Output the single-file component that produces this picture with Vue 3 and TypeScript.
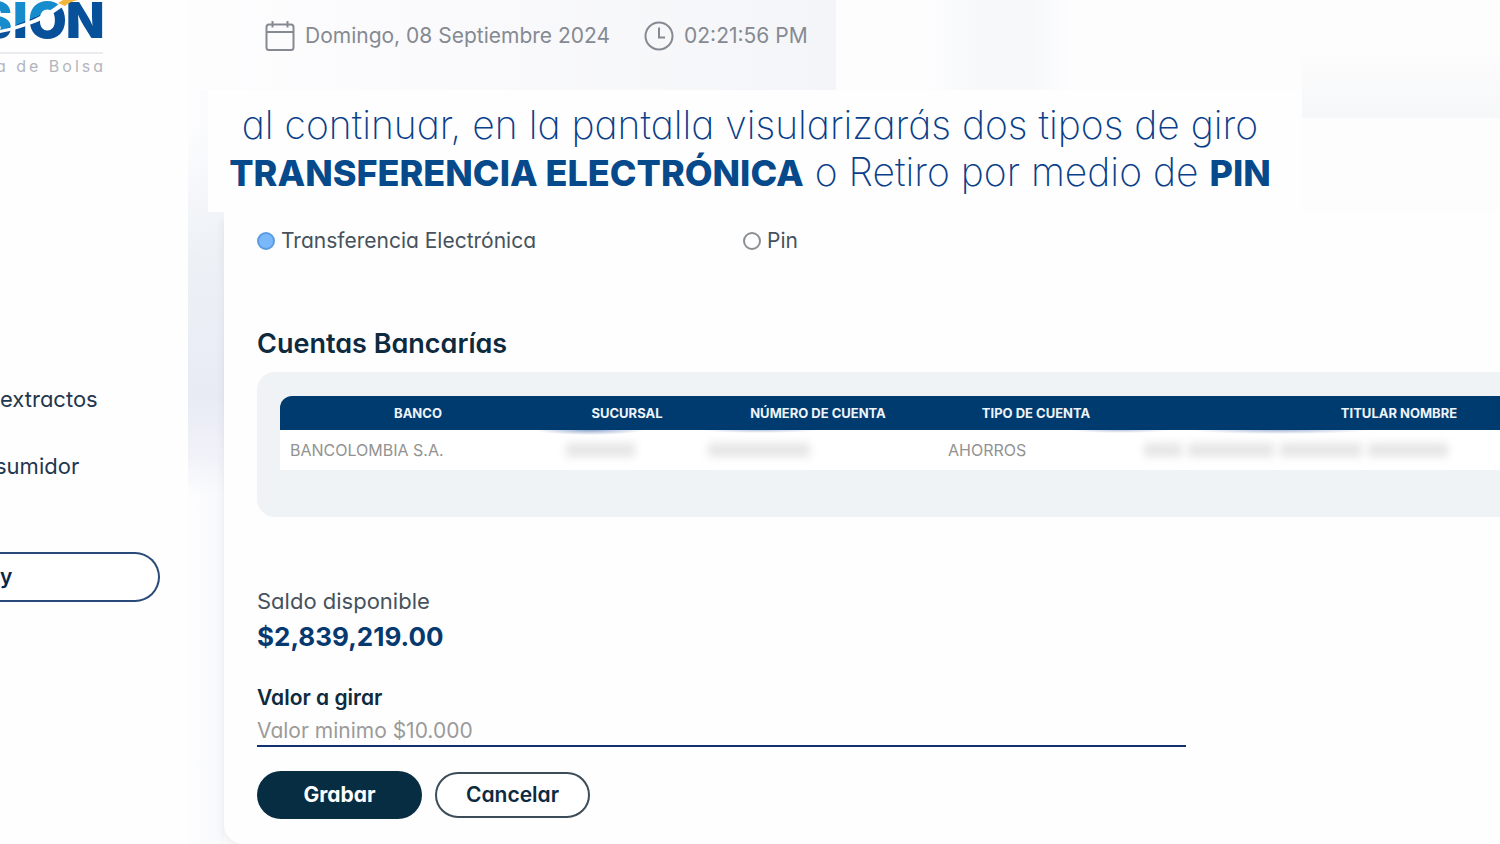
<script setup lang="ts">
import { ref } from 'vue'

interface Column {
  key: string
  label: string
}

const columns: Column[] = [
  { key: 'bank', label: 'BANCO' },
  { key: 'branch', label: 'SUCURSAL' },
  { key: 'number', label: 'NÚMERO DE CUENTA' },
  { key: 'type', label: 'TIPO DE CUENTA' },
  { key: 'holder', label: 'TITULAR NOMBRE' },
]

const method = ref<'transfer' | 'pin'>('transfer')
const amount = ref('')
</script>

<template>
  <div class="app">
    <aside class="sidebar">
      <svg class="logo" viewBox="0 0 106 54" role="img" aria-label="SION">
        <defs>
          <linearGradient id="ink" gradientUnits="userSpaceOnUse" x1="20" y1="-15" x2="46" y2="51">
            <stop offset="0.5" stop-color="#178ccd" />
            <stop offset="0.5" stop-color="#07509a" />
          </linearGradient>
        </defs>
        <g class="logo-text" fill="url(#ink)">
          <text x="-21" y="38">S</text>
          <text x="13" y="38">I</text>
          <text x="28" y="38">O</text>
          <text x="66" y="38" fill="#07509a">N</text>
        </g>
        <path d="M0 30C24 25 46 15 60 3L66 4C50 18 27 28 0 33Z" fill="#fff" />
        <path d="M58 3L63 0H78C73 1 68 3 65 6Z" fill="#f3b63c" />
        <path d="M0 53H103" stroke="#d9dbe0" stroke-width="1" />
      </svg>
      <p class="tagline">a de Bolsa</p>
      <nav class="menu">
        <a class="menu-link" href="#extractos">extractos</a>
        <a class="menu-link" href="#consumidor">sumidor</a>
      </nav>
      <button class="side-button" type="button">y</button>
    </aside>

    <main class="main">
      <header class="topbar">
        <span class="stamp">
          <svg class="icon" viewBox="0 0 30 30" aria-hidden="true">
            <rect x="1.500" y="3.500" width="27" height="25.500" rx="2.500" />
            <path d="M1.500 11H28.500M7.500 0V6.500M22.500 0V6.500" />
          </svg>
          Domingo, 08 Septiembre 2024
        </span>
        <span class="stamp">
          <svg class="icon" viewBox="0 0 30 30" aria-hidden="true">
            <circle cx="15" cy="15" r="13.500" />
            <path d="M15 6.500V16.500H21" />
          </svg>
          02:21:56 PM
        </span>
      </header>

      <p class="caption">
        al continuar, en la pantalla visularizarás dos tipos de giro<br />
        <strong>TRANSFERENCIA ELECTRÓNICA</strong> o Retiro por medio de <strong>PIN</strong>
      </p>

      <form class="card" @submit.prevent>
        <div class="methods">
          <label class="method">
            <input v-model="method" class="radio" type="radio" name="method" value="transfer" />
            Transferencia Electrónica
          </label>
          <label class="method">
            <input v-model="method" class="radio" type="radio" name="method" value="pin" />
            Pin
          </label>
        </div>

        <h2 class="title">Cuentas Bancarías</h2>
        <div class="panel">
          <table class="accounts">
            <thead>
              <tr>
                <th v-for="c in columns" :key="c.key" :class="c.key" scope="col">{{ c.label }}</th>
              </tr>
            </thead>
            <tbody>
              <tr class="row">
                <td>BANCOLOMBIA S.A.</td>
                <td><span class="hidden short"></span></td>
                <td><span class="hidden medium"></span></td>
                <td>AHORROS</td>
                <td>
                  <span class="name">
                    <span class="hidden w1"></span>
                    <span class="hidden w2"></span>
                    <span class="hidden w3"></span>
                    <span class="hidden w4"></span>
                  </span>
                </td>
              </tr>
            </tbody>
          </table>
        </div>

        <p class="balance-label">Saldo disponible</p>
        <p class="balance">$2,839,219.00</p>

        <label class="field-label" for="amount">Valor a girar</label>
        <input id="amount" v-model="amount" class="field" type="text" placeholder="Valor minimo $10.000" />

        <div class="actions">
          <button class="button primary" type="submit">Grabar</button>
          <button class="button secondary" type="button">Cancelar</button>
        </div>
      </form>
    </main>
  </div>
</template>

<style>
body {
  margin: 0;
  background: #fdfdfe;
}
</style>

<style scoped>
.app {
  display: grid;
  grid-template-columns: 188px minmax(0, 1fr);
  min-height: 100vh;
  overflow: hidden;
  font-family: Inter, "Liberation Sans", sans-serif;
  font-feature-settings: "cv11";
  font-size: 21px;
  line-height: 26px;
  color: #46525c;
}

p,
h2 {
  margin: 0;
}

.sidebar {
  overflow: hidden;
  background: #fefefe;
}

.logo {
  display: block;
  width: 106px;
  height: 54px;
}

.logo-text {
  font-size: 50px;
  font-weight: 900;
}

.tagline {
  display: flex;
  justify-content: flex-end;
  width: 106px;
  font-size: 16px;
  line-height: 24px;
  letter-spacing: 3px;
  white-space: nowrap;
  color: #b3b5bd;
}

.menu {
  display: flex;
  flex-direction: column;
  gap: 41px;
  margin-top: 308px;
  font-size: 22px;
}

.menu-link {
  display: flex;
  color: #22374f;
  text-decoration: none;
}

.menu-link:last-child {
  margin-left: -5px;
}

.side-button {
  display: block;
  width: 160px;
  height: 50px;
  margin-top: 73px;
  padding: 0;
  border: 2px solid #294a78;
  border-left: 0;
  border-radius: 0 25px 25px 0;
  background: #fff;
  font: inherit;
  font-weight: 600;
  text-align: left;
  color: #0a2748;
}

.main {
  background:
    linear-gradient(90deg, #fdfdfe 0, #fafafc 40%, #f4f5f8 100%) 0 0 / 648px 90px no-repeat,
    linear-gradient(90deg, transparent, #f7f8fa 35%, #f7f8fa 70%, transparent) 735px 0 / 150px 90px no-repeat,
    linear-gradient(180deg, transparent 40%, #f6f7f8 100%) 100% 0 / 198px 118px no-repeat,
    linear-gradient(180deg, transparent 26%, #edf1f6 52%, #e8ebf4 80%, #f1f2f9 92%, transparent 100%) 0 0 / 36px 495px no-repeat,
    linear-gradient(90deg, #fdfdfe 0, #f8f9fb 36px, #fdfdfe 36px);
}

.topbar {
  display: flex;
  align-items: center;
  gap: 34px;
  height: 90px;
  padding: 0 0 18px 77px;
  box-sizing: border-box;
  color: #858a92;
}

.stamp {
  display: flex;
  align-items: center;
  gap: 10px;
  white-space: nowrap;
}

.icon {
  width: 30px;
  height: 30px;
  fill: none;
  stroke: #858a92;
  stroke-width: 2;
}

.caption {
  max-width: 1094px;
  height: 122px;
  margin-left: 20px;
  padding: 11px 10px 0 0;
  box-sizing: border-box;
  background: #fefefe;
  font-size: 39px;
  font-weight: 200;
  line-height: 47px;
  text-align: center;
  white-space: nowrap;
  color: #0a3f8a;
}

.caption strong {
  font-size: 36px;
  font-weight: 800;
  color: #064a8c;
}

.card {
  margin-left: 36px;
  padding: 16px 0 25px 33px;
  border-bottom-left-radius: 20px;
  background: #fefefe;
  box-shadow: -4px 6px 6px -2px rgba(60, 70, 110, 0.06);
}

.methods {
  display: grid;
  grid-template-columns: 486px 1fr;
}

.method {
  display: flex;
  align-items: center;
  gap: 6px;
}

.radio {
  width: 18px;
  height: 18px;
  margin: 0;
  appearance: none;
  box-sizing: border-box;
  border: 2px solid #8b8f94;
  border-radius: 50%;
  background: #fff;
}

.radio:checked {
  border-color: #5d9be0;
  background: #7ab8fc;
}

.title {
  margin-top: 74px;
  font-size: 27px;
  font-weight: 600;
  line-height: 32px;
  color: #0e2a3e;
}

.panel {
  width: max-content;
  margin-top: 12px;
  padding: 24px 24px 47px 23px;
  border-radius: 18px;
  background: #eff3f6;
}

.accounts {
  width: 1384px;
  table-layout: fixed;
  border-spacing: 0;
  font-size: 16px;
}

th {
  height: 34px;
  padding: 0;
  background: #003b70;
  font-size: 13px;
  font-weight: 700;
  line-height: 20px;
  color: #eef4fa;
}

th:first-child {
  border-top-left-radius: 12px;
}

.bank {
  width: 276px;
}

.branch {
  width: 142px;
}

.number {
  width: 240px;
}

.type {
  width: 196px;
}

.row {
  background:
    radial-gradient(ellipse 54px 5px at 310px 0, #8fa6cc, transparent),
    radial-gradient(ellipse 60px 3px at 480px 0, #b9c7de, transparent),
    radial-gradient(ellipse 50px 3px at 840px 0, #b9c7de, transparent),
    radial-gradient(ellipse 90px 4px at 1000px 0, #a9b9d6, transparent),
    #fff;
}

td {
  height: 40px;
  padding: 0 10px;
  line-height: 20px;
  color: #929292;
}

.hidden {
  display: block;
  height: 14px;
  background: #e6e6e6;
  filter: blur(4px);
}

.short {
  width: 69px;
}

.medium {
  width: 102px;
}

.name {
  display: flex;
  gap: 6px;
}

.w1 {
  width: 38px;
}

.w2 {
  width: 86px;
}

.w3 {
  width: 82px;
}

.w4 {
  width: 80px;
}

.balance-label {
  margin-top: 71px;
  font-size: 22px;
}

.balance {
  margin-top: 5px;
  font-size: 26px;
  font-weight: 700;
  line-height: 36px;
  color: #06396f;
}

.field-label {
  display: block;
  margin-top: 30px;
  font-weight: 600;
  color: #0e2a3e;
}

.field {
  display: block;
  width: 100%;
  max-width: 929px;
  height: 32px;
  margin-top: 4px;
  padding: 0;
  box-sizing: border-box;
  border: 0;
  border-bottom: 2px solid #14306e;
  border-radius: 0;
  outline: 0;
  background: transparent;
  font: inherit;
  color: #46525c;
}

.field::placeholder {
  color: #9b9b9b;
  opacity: 1;
}

.actions {
  display: flex;
  align-items: center;
  gap: 13px;
  margin-top: 24px;
}

.button {
  box-sizing: border-box;
  padding: 0;
  border-radius: 24px;
  font: inherit;
  font-weight: 600;
}

.primary {
  width: 165px;
  height: 48px;
  border: 0;
  background: #062d42;
  font-weight: 700;
  color: #fff;
}

.secondary {
  width: 155px;
  height: 46px;
  border: 2px solid #3c4c58;
  background: #fff;
  color: #0e2a3e;
}
</style>
